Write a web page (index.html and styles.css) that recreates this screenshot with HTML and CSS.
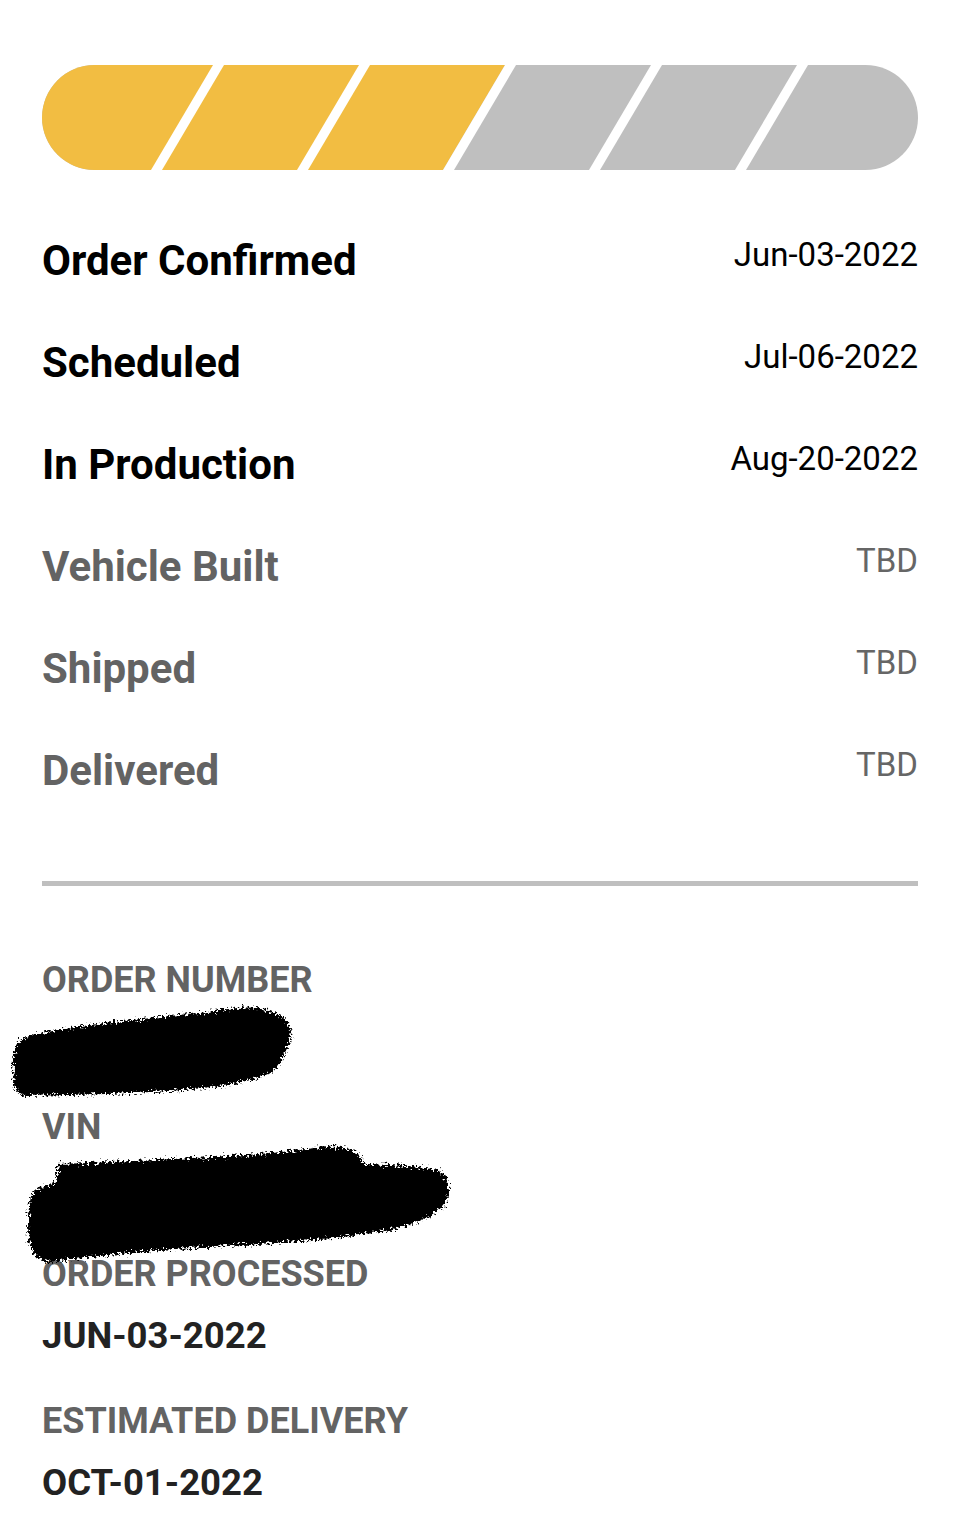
FILE: index.html
```html
<!DOCTYPE html>
<html lang="en">
<head>
<meta charset="utf-8">
<title>Order Status</title>
<link rel="stylesheet" href="styles.css">
</head>
<body>
<main class="page">
  <div class="progress">
    <svg class="progress-svg" width="876" height="105" viewBox="0 0 876 105" aria-hidden="true">
      <defs>
        <clipPath id="pill"><rect x="0" y="0" width="876" height="105" rx="52.5" ry="52.5"/></clipPath>
      </defs>
      <g clip-path="url(#pill)">
        <rect x="0" y="0" width="876" height="105" fill="#BFBFBF"/>
        <polygon points="0,0 463,0 401,105 0,105" fill="#F2BD42"/>
        <g fill="#FFFFFF">
          <polygon points="171,0 182,0 120,105 109,105"/>
          <polygon points="317,0 328,0 266,105 255,105"/>
          <polygon points="463,0 474,0 412,105 401,105"/>
          <polygon points="609,0 620,0 558,105 547,105"/>
          <polygon points="755,0 766,0 704,105 693,105"/>
        </g>
      </g>
    </svg>
  </div>

  <ul class="steps">
    <li class="step done"><span class="step-name">Order Confirmed</span><span class="step-date">Jun-03-2022</span></li>
    <li class="step done"><span class="step-name">Scheduled</span><span class="step-date">Jul-06-2022</span></li>
    <li class="step done"><span class="step-name">In Production</span><span class="step-date">Aug-20-2022</span></li>
    <li class="step pending"><span class="step-name">Vehicle Built</span><span class="step-date">TBD</span></li>
    <li class="step pending"><span class="step-name">Shipped</span><span class="step-date">TBD</span></li>
    <li class="step pending"><span class="step-name">Delivered</span><span class="step-date">TBD</span></li>
  </ul>

  <hr class="divider">

  <dl class="details">
    <div class="detail">
      <dt class="detail-label">ORDER NUMBER</dt>
      <dd class="detail-value redacted">
        <svg class="scribble scribble-1" width="310" height="110" viewBox="0 0 310 110" aria-hidden="true">
          <defs>
            <filter id="rough1" x="-10%" y="-20%" width="120%" height="140%">
              <feTurbulence type="fractalNoise" baseFrequency="0.45" numOctaves="3" seed="3" result="n"/>
              <feDisplacementMap in="SourceGraphic" in2="n" scale="11" xChannelSelector="R" yChannelSelector="G"/>
            </filter>
          </defs>
          <path filter="url(#rough1)" fill="#000" d="M14,72 C10,60 16,44 26,40 C60,30 120,24 200,16 C225,13 240,8 262,12 C284,16 296,30 290,44 C286,56 282,64 276,72 C262,84 220,90 170,94 C120,97 70,98 28,99 C16,99 12,90 14,72 Z"/>
        </svg>
      </dd>
    </div>
    <div class="detail">
      <dt class="detail-label">VIN</dt>
      <dd class="detail-value redacted">
        <svg class="scribble scribble-2" width="470" height="150" viewBox="0 0 470 150" aria-hidden="true">
          <defs>
            <filter id="rough2" x="-10%" y="-20%" width="120%" height="140%">
              <feTurbulence type="fractalNoise" baseFrequency="0.4" numOctaves="3" seed="7" result="n"/>
              <feDisplacementMap in="SourceGraphic" in2="n" scale="12" xChannelSelector="R" yChannelSelector="G"/>
            </filter>
          </defs>
          <path filter="url(#rough2)" fill="#000" d="M58,30 C120,28 200,24 260,20 C300,17 320,12 340,13 C356,14 360,24 366,30 C390,31 420,32 438,36 C450,42 452,60 444,72 C432,84 410,92 380,98 C330,106 260,110 190,114 C130,118 80,124 52,128 C38,128 30,118 29,104 C27,88 28,72 32,60 C38,52 50,52 56,48 Z"/>
        </svg>
      </dd>
    </div>
    <div class="detail">
      <dt class="detail-label">ORDER PROCESSED</dt>
      <dd class="detail-value">JUN-03-2022</dd>
    </div>
    <div class="detail">
      <dt class="detail-label">ESTIMATED DELIVERY</dt>
      <dd class="detail-value">OCT-01-2022</dd>
    </div>
  </dl>
</main>
</body>
</html>
```

FILE: styles.css
```css
html, body {
  margin: 0;
  padding: 0;
  background: #FFFFFF;
}

body {
  font-family: Roboto, "Liberation Sans", Arial, sans-serif;
  color: #000;
}

.page {
  padding: 65px 42px 0 42px;
}

.progress {
  height: 105px;
}

.progress-svg {
  display: block;
}

.steps {
  list-style: none;
  margin: 40px 0 0 0;
  padding: 0;
}

.step {
  display: flex;
  justify-content: space-between;
  align-items: flex-start;
  height: 102px;
}

.step-name {
  font-size: 42px;
  font-weight: 700;
  line-height: 102px;
}

.step-date {
  font-size: 33px;
  font-weight: 400;
  line-height: 90px;
}

.step.done .step-name,
.step.done .step-date {
  color: #000;
}

.step.pending .step-name {
  color: #636363;
}

.step.pending .step-date {
  color: #666666;
}

.divider {
  border: 0;
  height: 5px;
  background: #BFBFBF;
  margin: 59px 0 0 0;
}

.details {
  margin: 73px 0 0 0;
  padding: 0;
  display: flex;
  flex-direction: column;
  gap: 43px;
}

.detail {
  display: flex;
  flex-direction: column;
  gap: 20px;
}

.detail-label {
  font-size: 36px;
  font-weight: 700;
  line-height: 42px;
  color: #636363;
}

.detail-value {
  margin: 0;
  font-size: 36.5px;
  font-weight: 700;
  line-height: 42px;
  color: #222;
  height: 42px;
}

.redacted {
  position: relative;
}

.scribble {
  position: absolute;
  display: block;
}

.scribble-1 {
  left: -42px;
  top: -24px;
}

.scribble-2 {
  left: -42px;
  top: -34px;
}
```
